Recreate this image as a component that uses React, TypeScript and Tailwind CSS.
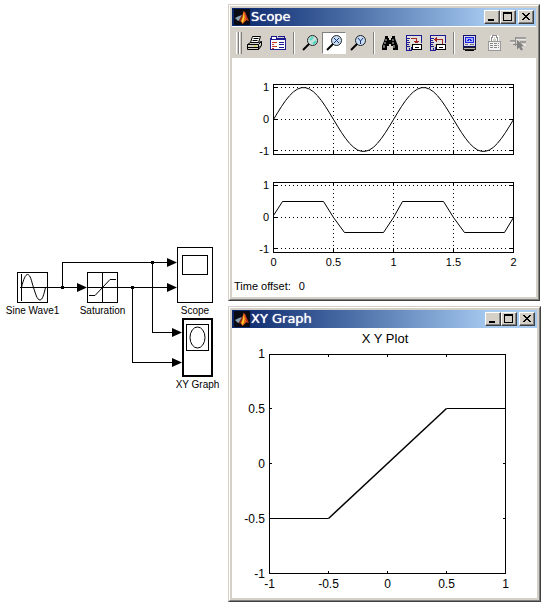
import React from 'react'

type Point = [number, number]

const toPoints = (points: Point[]) => points.map((p) => p.join(',')).join(' ')

// Two periods of a sine wave, sampled in plot pixels
const sinePoints: Point[] = Array.from({ length: 61 }, (_, i) => [
    i * 4 + 0.5,
    35.5 - 32 * Math.sin((i / 30) * Math.PI * 2),
])

const saturatedPoints: Point[] = [
    [0.5, 33.5],
    [9.5, 19.5],
    [50.5, 19.5],
    [60.5, 35.5],
    [71.5, 50.5],
    [110.5, 50.5],
    [120.5, 35.5],
    [129.5, 19.5],
    [170.5, 19.5],
    [180.5, 35.5],
    [191.5, 50.5],
    [231.5, 50.5],
    [240.5, 35.5],
]

const MatlabIcon = () => (
    <svg viewBox="0 0 16 16" className="size-4 shrink-0" aria-hidden="true">
        <path d="M0 0h16v16H0z" fill="#0a0a14" />
        <path d="M1 9l4-2 3-1-2 5-2 1z" fill="#8aa0b0" />
        <path d="M5 11l3-5 2-4 1 3-2 6-3 2z" fill="#8c2c18" />
        <path d="M9.500 2l2 2 1 4 2 4-2-1-2 2-2 2-1.500-3 1.500-4z" fill="#e8641c" />
        <path d="M9.500 4l1 4-1 4-1.500 2-.5-2 1.500-4z" fill="#ffd428" />
        <path d="M11 3l4 9-3-2z" fill="#b83420" />
    </svg>
)

const PrintIcon = () => (
    <svg viewBox="0 0 16 16" className="size-4" fill="none" stroke="#000">
        <path d="M4.500 7.500L6.500 1.500h8l-2 6z" fill="#fff" />
        <path d="M7.500 3.500h5M6.500 5.500h5" />
        <path d="M1.500 9.500l3-2h8l3-1v4l-3 4h-11z" fill="#d4d0c8" />
        <path d="M1.500 9.500h11v5M12.500 9.500l3-3M2 12.500h10M13 12.500l2-2" />
        <path d="M8 11h3" stroke="#d8d820" />
    </svg>
)

const ParametersIcon = () => (
    <svg viewBox="0 0 16 16" className="size-4" fill="none" shapeRendering="crispEdges">
        <path d="M.5 14.500v-11h1v-2h5v2h9v11z" fill="#fff" stroke="#1c1c90" />
        <path d="M8 1.500h6.500v2M1 4.500h14" stroke="#1c1c90" />
        <path d="M2 7.500h5M2 11.500h5" stroke="#c83828" />
        <path d="M2 9.500h2M2 13h2" stroke="#c83828" />
        <path d="M9 7.500h5M9 9.500h5M9 12.500h5" stroke="#1c1c90" />
    </svg>
)

const ZoomIcon = ({ mode }: { mode: 'both' | 'x' | 'y' }) => (
    <svg viewBox="0 0 16 16" className="size-4" fill="none">
        <circle cx="10.500" cy="5.500" r="5" fill={mode === 'both' ? '#c8e0dc' : '#c4dcf4'} stroke="#222" />
        <path d="M7 9L1 15" stroke="#000" strokeWidth="2" />
        {mode === 'both' && <path d="M8 5l3-3M11 9l3-3" stroke="#48e0c0" strokeWidth="2" />}
        {mode === 'x' && <path d="M8 3l5 5M13 3L8 8" stroke="#203070" />}
        {mode === 'y' && <path d="M8 3l2.500 3L13 3M10.500 6v3" stroke="#203070" />}
    </svg>
)

const BinocularsIcon = () => (
    <svg viewBox="0 0 16 16" className="size-4" fill="#000">
        <path d="M3 1h3v2h1v2h2V3h1V1h3v2l1 3 2 5v4h-5v-4H9V9H7v2H5v4H0v-4l2-5 1-3z" />
        <path d="M4 4v2M3 7v2M2 10v3M11 4v2M11 7v2M12 10v3" stroke="#d4d0c8" />
    </svg>
)

const AxesIcon = ({ restore = false }: { restore?: boolean }) => (
    <svg viewBox="0 0 16 16" className="size-4" fill="none" shapeRendering="crispEdges">
        <path d="M1 1h14v8H1z" fill="#e4e0dc" />
        <path d="M.5 0v15.500H6M0 .5h15.500V8" stroke="#1c1c90" />
        <path d="M1 3.500h3M1 5.500h2M1 7.500h3M1 9.500h2M1 11.500h3M3.500 13v2M5.500 12v3" stroke="#1c1c90" />
        {restore ? (
            <path d="M4 4.500h8.500v4M6.500 2v5M5.500 3v3" stroke="#a02828" />
        ) : (
            <path d="M5 3.500h5.500v4M8 6.500h5M9 7.500h3" stroke="#a02828" />
        )}
        <path d="M6.500 9.500h9v5h-9z" fill="#fff" stroke="#000" />
        <path d="M9 12.500h4" stroke="#000" />
    </svg>
)

const FloatingScopeIcon = () => (
    <svg viewBox="0 0 16 16" className="size-4" fill="none" shapeRendering="crispEdges">
        <path d="M1.500.5h12v11h-12z" fill="#dcdce8" stroke="#101070" />
        <path d="M3.500 2.500h8v5h-8z" fill="#a8b8f8" stroke="#2020e0" />
        <path d="M5 5.500h1v-1h2v1h2" stroke="#2020e0" />
        <path d="M3 9.500h3M8 9.500h4" stroke="#777" />
        <path d="M1.500 12h12v2h-12z" fill="#b8b4ac" stroke="#222" />
        <path d="M3 15.500h9" stroke="#000" />
    </svg>
)

const LockIcon = () => (
    <svg viewBox="0 0 16 16" className="size-4" fill="none" shapeRendering="crispEdges">
        <path d="M5.500 7V2.500h1v-2h4v2h1V7" stroke="#fff" strokeWidth="3" />
        <path d="M5.500 7V2.500h1v-2h4v2h1V7" stroke="#8c8c8c" />
        <path d="M2.500 6.500h12v9h-12z" fill="#f4f4f4" stroke="#999" />
        <path d="M4 8.500h9M4 10.500h9M4 12.500h9" stroke="#888" strokeDasharray="3 1" />
    </svg>
)

const SignalIcon = () => (
    <svg viewBox="0 0 16 16" className="size-4" fill="none">
        <path d="M0 7h6M5 4h11M10 10h6" stroke="#fff" />
        <path d="M0 6h6M5 3h11M10 7h6" stroke="#8c8c8c" strokeWidth="1.500" />
        <path d="M5.500 2v9M3 9.500h5" stroke="#8c8c8c" />
        <path d="M7 5l7 6-3 .5 2 3-2 1-2-3-2 2z" fill="#808080" />
    </svg>
)

const toolGroups = [
    [
        { label: 'Print', icon: <PrintIcon /> },
        { label: 'Parameters', icon: <ParametersIcon /> },
    ],
    [
        { label: 'Zoom', icon: <ZoomIcon mode="both" /> },
        { label: 'Zoom X-axis', icon: <ZoomIcon mode="x" />, pressed: true },
        { label: 'Zoom Y-axis', icon: <ZoomIcon mode="y" /> },
    ],
    [
        { label: 'Autoscale', icon: <BinocularsIcon /> },
        { label: 'Save axes settings', icon: <AxesIcon /> },
        { label: 'Restore axes settings', icon: <AxesIcon restore /> },
    ],
    [
        { label: 'Floating scope', icon: <FloatingScopeIcon /> },
        { label: 'Lock axes selection', icon: <LockIcon />, disabled: true },
        { label: 'Signal selection', icon: <SignalIcon />, disabled: true },
    ],
]

const Toolbar = () => (
    <div className="flex h-8 items-center overflow-hidden border-t border-white bg-[#d4d0c8] pl-1">
        <div className="flex h-[22px]">
            <span className="w-[3px] border-r border-l border-r-[#808080] border-l-white" />
            <span className="w-[3px] border-r border-l border-r-[#808080] border-l-white" />
        </div>
        {toolGroups.map((group, i) => (
            <React.Fragment key={i}>
                {i > 0 && (
                    <div className="flex w-2 shrink-0 justify-center">
                        <span className="h-[22px] w-0.5 border-r border-l border-r-white border-l-[#808080]" />
                    </div>
                )}
                {group.map((tool) => (
                    <button
                        key={tool.label}
                        type="button"
                        aria-label={tool.label}
                        aria-pressed={'pressed' in tool ? true : undefined}
                        disabled={'disabled' in tool}
                        className="flex h-[22px] w-6 shrink-0 items-center justify-center border border-transparent aria-pressed:border-t-[#808080] aria-pressed:border-l-[#808080] aria-pressed:bg-white"
                    >
                        {tool.icon}
                    </button>
                ))}
            </React.Fragment>
        ))}
    </div>
)

const CaptionButton = ({ label, children }: { label: string; children: React.ReactNode }) => (
    <button
        type="button"
        aria-label={label}
        className="h-3.5 w-4 border border-t-white border-r-[#404040] border-b-[#404040] border-l-white bg-[#d4d0c8] shadow-[inset_-1px_-1px_0_#808080]"
    >
        <svg viewBox="0 0 14 12" className="h-3 w-3.5" fill="none" stroke="#000" shapeRendering="crispEdges">
            {children}
        </svg>
    </button>
)

interface WindowProps {
    title: string
    children: React.ReactNode
}

const Window = ({ title, children }: WindowProps) => (
    <section className="border border-t-[#d4d0c8] border-r-[#404040] border-b-[#404040] border-l-[#d4d0c8]">
        <div className="border border-t-white border-r-[#808080] border-b-[#808080] border-l-white">
            <div className="border-2 border-[#d4d0c8] bg-white">
                <header className="flex h-[18px] items-center bg-linear-to-r from-[#0a246a] to-[#a6caf0] to-85% px-0.5">
                    <MatlabIcon />
                    <h2 className="ml-px flex-1 font-['DejaVu_Sans'] text-[13px] leading-4 text-white [text-shadow:0_0_1px_#fff]">
                        {title}
                    </h2>
                    <CaptionButton label="Minimize">
                        <path d="M3 9h6" strokeWidth="2" />
                    </CaptionButton>
                    <CaptionButton label="Maximize">
                        <path d="M2.500 2.500h8v7h-8z" />
                        <path d="M2 2h9" strokeWidth="2" />
                    </CaptionButton>
                    <div className="ml-0.5 flex">
                        <CaptionButton label="Close">
                            <path d="M3 2l7 7M4 2l7 7M10 2L3 9M11 2L4 9" />
                        </CaptionButton>
                    </div>
                </header>
                {children}
            </div>
        </div>
    </section>
)

const YLabels = ({ labels, className }: { labels: string[]; className: string }) => (
    <div className={`flex w-[37px] shrink-0 flex-col items-end justify-between ${className}`}>
        {labels.map((label) => (
            <span key={label} className="flex h-0 items-center">
                {label}
            </span>
        ))}
    </div>
)

const XLabels = ({ labels }: { labels: string[] }) => (
    <div className="flex h-4 justify-between">
        {labels.map((label) => (
            <span key={label} className="flex w-px justify-center">
                {label}
            </span>
        ))}
    </div>
)

const ScopePlot = ({ points }: { points: Point[] }) => (
    <div className="flex">
        <YLabels labels={['1', '0', '-1']} className="pt-[3px] pb-1" />
        <svg
            viewBox="0 0 241 71"
            preserveAspectRatio="none"
            className="ml-1 h-[71px] min-w-0 flex-1"
            fill="none"
            stroke="#000"
        >
            <g shapeRendering="crispEdges">
                <path d="M.5.5h240v70H.5z" />
                <path
                    d="M4 3.500h236M4 35.500h236M4 66.500h236M60.500 3v67M120.500 3v67M180.500 3v67"
                    strokeDasharray="1 3"
                />
                <path d="M60.500 0v4M120.500 0v4M180.500 0v4M60.500 66v4M120.500 66v4M180.500 66v4M1 3.500h3M1 35.500h3M1 66.500h3M237 3.500h3M237 35.500h3M237 66.500h3" />
            </g>
            <polyline points={toPoints(points)} />
        </svg>
    </div>
)

const ScopeWindow = () => (
    <Window title="Scope">
        <Toolbar />
        <div className="pt-[26px] pb-[3px] text-[11px] leading-4">
            <div className="pr-[22px]">
                <ScopePlot points={sinePoints} />
                <div className="h-[27px]" />
                <ScopePlot points={saturatedPoints} />
                <div className="mt-px ml-[41px]">
                    <XLabels labels={['0', '0.5', '1', '1.5', '2']} />
                </div>
            </div>
            <p className="mt-2 flex gap-2 pl-0.5">
                <span>Time offset:</span>
                <span>0</span>
            </p>
        </div>
    </Window>
)

const XYGraphWindow = () => (
    <Window title="XY Graph">
        <div className="pt-[3px] pr-[31px] pb-1.5 text-xs leading-4">
            <h3 className="mb-[7px] ml-8 text-center text-[13px] leading-4">X Y Plot</h3>
            <div className="flex">
                <YLabels labels={['1', '0.5', '0', '-0.5', '-1']} className="pr-1" />
                <svg
                    viewBox="0 0 237 220"
                    preserveAspectRatio="none"
                    className="h-[220px] min-w-0 flex-1"
                    fill="none"
                    stroke="#000"
                >
                    <g shapeRendering="crispEdges">
                        <path d="M.5.5h236v219H.5z" />
                        <path d="M59.500 0v3M118.500 0v3M177.500 0v3M59.500 217v3M118.500 217v3M177.500 217v3" />
                        <path d="M0 54.500h3M0 109.500h3M0 164.500h3M234 54.500h3M234 109.500h3M234 164.500h3" />
                    </g>
                    <path d="M.5 164.500h59M177.500 54.500h59" />
                    <path d="M59.500 164.500l118-110" strokeWidth="1.500" />
                </svg>
            </div>
            <div className="mt-0.5 ml-[37px]">
                <XLabels labels={['-1', '-0.5', '0', '0.5', '1']} />
            </div>
        </div>
    </Window>
)

interface BlockProps {
    name: string
    /** Position of the block on the model canvas */
    place: string
    /** Size and border of the block's box */
    box: string
    children: React.ReactNode
}

const Block = ({ name, place, box, children }: BlockProps) => (
    <div className={`absolute flex flex-col items-center ${place}`}>
        <div className={`border-black bg-white ${box}`}>
            <svg className="size-full" fill="none" stroke="#000">
                {children}
            </svg>
        </div>
        <span className="mt-0.5 text-[10px] leading-3 whitespace-nowrap">{name}</span>
    </div>
)

const Model = () => (
    <div className="relative mt-60 h-40 w-[228px] shrink-0">
        <Block name="Sine Wave1" place="top-8 left-[17px] w-[31px]" box="size-[31px] border">
            <path d="M3.500 1v27M2 14.500h27" shapeRendering="crispEdges" />
            <path d="M3.500 14.500C5.500 6 7.500 1.500 9.500 1.500c3 0 4 7 6 13s3.500 12.500 6.500 12.500c2.500 0 4-6 5.500-12.500" />
        </Block>
        <Block name="Saturation" place="top-8 left-[87px] w-[31px]" box="size-[31px] border">
            <path d="M14.500 0v29M0 14.500h29" shapeRendering="crispEdges" />
            <path d="M1 22.500h6l15-16h6" />
        </Block>
        <Block name="Scope" place="top-[7px] left-[177px] w-9" box="h-14 w-9 border">
            <path d="M4.500 7.500h25v19h-25z" shapeRendering="crispEdges" />
        </Block>
        <Block name="XY Graph" place="top-[78px] left-[182px] w-[31px]" box="h-[59px] w-[31px] border-2">
            <path d="M2.500 4.500h22v26h-22z" shapeRendering="crispEdges" />
            <ellipse cx="13.500" cy="17.500" rx="7.500" ry="10.500" />
        </Block>
        {/* Signal lines, branch points and arrow heads */}
        <svg className="absolute inset-0 size-full" fill="none" stroke="#000" shapeRendering="crispEdges">
            <path d="M47 47.500h32M62.500 47.500v-25h106M117 47.500h52M152.500 22.500v70h21M132.500 47.500v75h41" />
            <path d="M61 46h3v3h-3zM131 46h3v3h-3zM151 21h3v3h-3z" fill="#000" stroke="none" />
            <path
                d="M77 43l10 4.500-10 4.500zM167 18l10 4.500-10 4.500zM167 43l10 4.500-10 4.500zM172 88l10 4.500-10 4.500zM172 118l10 4.500-10 4.500z"
                fill="#000"
                stroke="none"
                shapeRendering="auto"
            />
        </svg>
    </div>
)

export default function App() {
    return (
        <main className="flex min-h-screen items-start bg-white font-['Liberation_Sans',sans-serif] text-black">
            <Model />
            <div className="flex min-w-0 flex-1 flex-col gap-[5px] pt-1 pr-[5px]">
                <div className="pr-px">
                    <ScopeWindow />
                </div>
                <XYGraphWindow />
            </div>
        </main>
    )
}
